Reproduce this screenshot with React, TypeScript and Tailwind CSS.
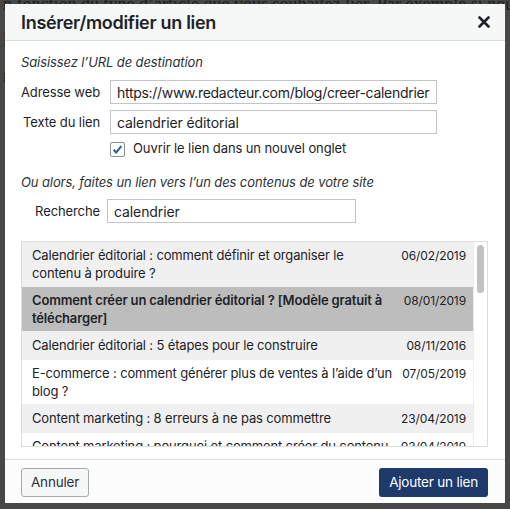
import React from "react";

const rows = [
  { title: ["Calendrier éditorial : comment définir et organiser le", "contenu à produire ?"], date: "06/02/2019", tone: "alt" },
  { title: ["Comment créer un calendrier éditorial ? [Modèle gratuit à", "télécharger]"], date: "08/01/2019", tone: "selected" },
  { title: ["Calendrier éditorial : 5 étapes pour le construire"], date: "08/11/2016", tone: "alt" },
  { title: ["E-commerce : comment générer plus de ventes à l’aide d’un", "blog ?"], date: "07/05/2019", tone: "plain" },
  { title: ["Content marketing : 8 erreurs à ne pas commettre"], date: "23/04/2019", tone: "alt" },
  { title: ["Content marketing : pourquoi et comment créer du contenu", "de qualité ?"], date: "03/04/2019", tone: "plain" },
];

export default function App() {
  return (
    <div className="relative h-[509px] w-[510px] overflow-hidden bg-[#474747] font-['Inter',sans-serif] text-[#1d2327]">
      {/* page behind the overlay */}
      <div className="-mt-[14px] pl-[3px] font-['Liberation_Serif',serif] text-[18px] leading-[36px] text-[#1f1f1f] whitespace-nowrap">
        <p>n fonction du type d’article que vous souhaitez lier. Par exemple si nous v</p>
        <p>l’agence : Enrichir un article de blog avec des liens, ça aide aussi</p>
        <p>rendre le contenu plus complet et les éditeurs la lisent</p>
      </div>

      <div className="absolute left-[5px] top-[4px] flex h-[499px] w-[500px] flex-col overflow-hidden bg-white">
        <div className="flex h-[37px] shrink-0 items-center justify-between border-b border-[#dcdcde] bg-[#f6f7f7] pl-[16px] pr-[14px]">
          <h1 className="text-[18px] font-semibold tracking-[-0.3px]">Insérer/modifier un lien</h1>
          <svg width="12" height="12" viewBox="0 0 12 12" className="mr-[1px]">
            <path d="M1.5 1.5 L10.5 10.5 M10.5 1.5 L1.5 10.5" stroke="#1d2327" strokeWidth="2.6" strokeLinecap="round" />
          </svg>
        </div>

        <div className="flex min-h-0 flex-1 flex-col px-[16px] pt-[12px] text-[13px] tracking-[-0.1px]">
          <p className="italic leading-[18px] text-[#2c3338]">Saisissez l’URL de destination</p>

          <div className="mt-[9px] flex items-center">
            <span className="w-[79px] shrink-0 whitespace-nowrap pt-[2px] text-right">Adresse web</span>
            <div className="ml-[10px] flex h-[24px] w-[327px] shrink-0 items-center overflow-hidden whitespace-nowrap border border-[#c3c4c7] px-[6px] text-[14px] tracking-[-0.3px]">
              https://www.redacteur.com/blog/creer-calendrier
            </div>
          </div>

          <div className="mt-[6px] flex items-center">
            <span className="w-[79px] shrink-0 whitespace-nowrap pt-[2px] text-right">Texte du lien</span>
            <div className="ml-[10px] flex h-[24px] w-[327px] shrink-0 items-center border border-[#c3c4c7] px-[6px] text-[14px]">
              calendrier éditorial
            </div>
          </div>

          <div className="mt-[8px] flex h-[14px] items-center pl-[89px]">
            <span className="flex h-[15px] w-[15px] shrink-0 items-center justify-center rounded-[2px] border border-[#8c8f94] bg-white">
              <svg width="11" height="11" viewBox="0 0 11 11">
                <path d="M1.6 5.8 L4.2 8.4 L9.4 2.2" fill="none" stroke="#2c5a9a" strokeWidth="2" />
              </svg>
            </span>
            <span className="ml-[8px] whitespace-nowrap">Ouvrir le lien dans un nouvel onglet</span>
          </div>

          <p className="mt-[17px] whitespace-nowrap italic leading-[18px] text-[#2c3338]">Ou alors, faites un lien vers l’un des contenus de votre site</p>

          <div className="mt-[8px] flex items-center">
            <span className="w-[79px] shrink-0 whitespace-nowrap pt-[2px] text-right">Recherche</span>
            <div className="ml-[7px] flex h-[24px] w-[249px] shrink-0 items-center border border-[#c3c4c7] px-[6px] text-[14px]">
              calendrier
            </div>
          </div>

          <div className="mt-[18px] flex h-[206px] w-[467px] shrink-0 overflow-hidden border border-[#dcdcde]">
            <div className="min-w-0 flex-1">
              {rows.map((r, i) => (
                <div
                  key={i}
                  className={
                    "flex justify-between border-b border-[#f0f0f1] py-[4px] pl-[10px] pr-[7px] leading-[18px] " +
                    (r.tone === "selected" ? "bg-[#bdbdbd] font-semibold" : r.tone === "alt" ? "bg-[#f0f0f1]" : "bg-white")
                  }
                >
                  <span className="whitespace-nowrap text-[13px] tracking-[-0.15px]">
                    {r.title.map((t, j) => (
                      <React.Fragment key={j}>
                        {j > 0 && <br />}
                        {t}
                      </React.Fragment>
                    ))}
                  </span>
                  <span className="shrink-0 pl-[6px] pt-[1px] text-[12px] font-normal tracking-[-0.1px]">{r.date}</span>
                </div>
              ))}
            </div>
            <div className="w-[14px] shrink-0 border-l border-[#ececec] bg-white pt-[3px]">
              <div className="mx-auto h-[48px] w-[7px] rounded-full bg-[#c1c1c1]" />
            </div>
          </div>
        </div>

        <div className="flex h-[44px] shrink-0 items-start justify-between border-t border-[#dcdcde] bg-[#fcfcfc] px-[16px] pt-[8px]">
          <button className="h-[29px] rounded-[3px] border border-[#a7aaad] bg-[#f6f7f7] px-[9px] text-[13.5px] tracking-[-0.2px] text-[#2c3338]">
            Annuler
          </button>
          <button className="mr-[1px] h-[29px] rounded-[3px] bg-[#1d3a6b] px-[10px] text-[13.5px] tracking-[-0.2px] text-white">
            Ajouter un lien
          </button>
        </div>
      </div>
    </div>
  );
}
